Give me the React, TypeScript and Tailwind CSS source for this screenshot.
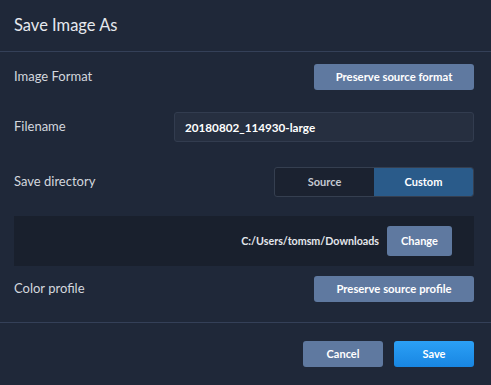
import { useState } from 'react';

const font = { fontFamily: 'Lato, "Open Sans", sans-serif' };

const Row = ({ label, children, className = '' }: { label: string; children: React.ReactNode; className?: string }) => (
  <div className={`flex items-center justify-between pl-[14px] pr-[17px] ${className}`}>
    <span className="text-[13px] text-[#d3d7de]">{label}</span>
    {children}
  </div>
);

export default function App() {
  const [dir, setDir] = useState<'source' | 'custom'>('custom');
  const [filename, setFilename] = useState('20180802_114930-large');

  return (
    <div className="w-[491px] h-[385px] bg-[#1f2839] text-white overflow-hidden" style={font}>
      {/* Header */}
      <div className="h-[52px] flex items-center px-[14px] border-b border-[#344058]">
        <h1 className="text-[16.5px] text-[#e6e9ee]">Save Image As</h1>
      </div>

      {/* Body */}
      <div className="pt-[12px]">
        <Row label="Image Format">
          <button className="w-[160px] h-[26px] rounded-[3px] bg-[#5f79a0] text-[11.3px] font-bold text-white">
            Preserve source format
          </button>
        </Row>

        <Row label="Filename" className="mt-[22px]">
          <input
            value={filename}
            onChange={(e) => setFilename(e.target.value)}
            className="w-[300px] h-[30px] rounded-[3px] bg-[#262f40] border border-[#323c4f] px-[10px] text-[11.7px] font-bold text-white outline-none"
          />
        </Row>

        <Row label="Save directory" className="mt-[25px]">
          <div className="flex w-[200px] h-[30px] rounded-[3px] overflow-hidden border border-[#353f50] bg-[#1b2230]">
            <button
              onClick={() => setDir('source')}
              className={`flex-1 text-[11px] font-bold ${dir === 'source' ? 'bg-[#2a5b8a] text-white' : 'text-[#c5cad3]'}`}
            >
              Source
            </button>
            <button
              onClick={() => setDir('custom')}
              className={`flex-1 text-[11px] font-bold ${dir === 'custom' ? 'bg-[#2a5b8a] text-white' : 'text-[#c5cad3]'}`}
            >
              Custom
            </button>
          </div>
        </Row>

        {/* Directory panel */}
        <div className="ml-[14px] mr-[17px] mt-[19px] h-[50px] bg-[#19202d] flex items-center justify-end gap-[8px] pr-[22px]">
          <span className="text-[10.7px] font-bold text-[#e4e7ec]">C:/Users/tomsm/Downloads</span>
          <button className="w-[65px] h-[30px] rounded-[3px] bg-[#5f79a0] text-[11px] font-bold text-white">
            Change
          </button>
        </div>

        <Row label="Color profile" className="mt-[10px]">
          <button className="w-[160px] h-[26px] rounded-[3px] bg-[#5f79a0] text-[11.3px] font-bold text-white">
            Preserve source profile
          </button>
        </Row>
      </div>

      {/* Footer */}
      <div className="mt-[20px] border-t border-[#344058] flex justify-end gap-[11px] pr-[17px] pt-[18px]">
        <button className="w-[80px] h-[26px] rounded-[3px] bg-[#5f79a0] text-[11px] font-bold text-white">
          Cancel
        </button>
        <button className="w-[80px] h-[26px] rounded-[3px] bg-gradient-to-b from-[#2ba0f6] to-[#1886e2] text-[11px] font-bold text-white">
          Save
        </button>
      </div>
    </div>
  );
}
